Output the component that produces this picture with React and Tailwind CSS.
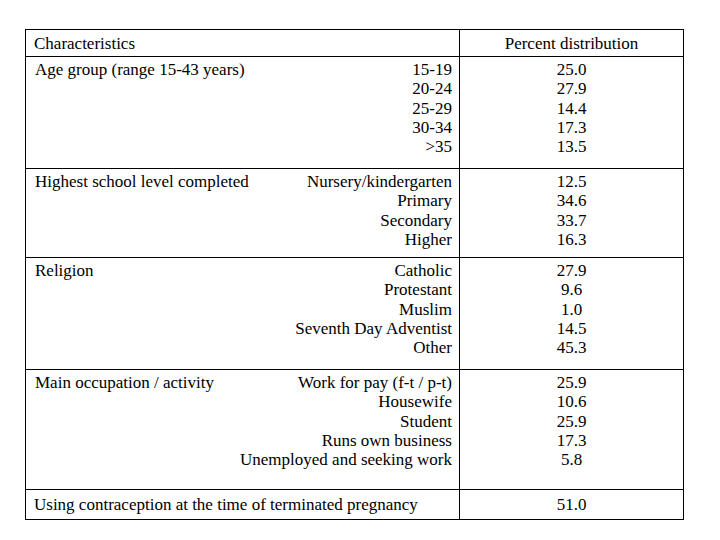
const rows = [
  {
    label: 'Age group (range 15-43 years)',
    h: 'h-[112px]',
    items: [
      ['15-19', '25.0'],
      ['20-24', '27.9'],
      ['25-29', '14.4'],
      ['30-34', '17.3'],
      ['>35', '13.5'],
    ],
  },
  {
    label: 'Highest school level completed',
    h: 'h-[89px]',
    items: [
      ['Nursery/kindergarten', '12.5'],
      ['Primary', '34.6'],
      ['Secondary', '33.7'],
      ['Higher', '16.3'],
    ],
  },
  {
    label: 'Religion',
    h: 'h-[112px]',
    items: [
      ['Catholic', '27.9'],
      ['Protestant', '9.6'],
      ['Muslim', '1.0'],
      ['Seventh Day Adventist', '14.5'],
      ['Other', '45.3'],
    ],
  },
  {
    label: 'Main occupation / activity',
    h: 'h-[120px]',
    items: [
      ['Work for pay (f-t / p-t)', '25.9'],
      ['Housewife', '10.6'],
      ['Student', '25.9'],
      ['Runs own business', '17.3'],
      ['Unemployed and seeking work', '5.8'],
    ],
  },
];

export default function App() {
  return (
    <div className="w-[720px] h-[540px] bg-white pt-[29px] pl-[25px] font-['Liberation_Serif',serif] text-[17px] leading-[19.25px] text-black">
      <div className="w-[659px] border border-black">
        {/* header */}
        <div className="flex h-[27px] border-b border-black">
          <div className="flex-1 flex items-center pl-[8px] pt-[1px]">Characteristics</div>
          <div className="w-[224px] border-l border-black flex items-center justify-center pt-[1px]">
            Percent distribution
          </div>
        </div>

        {rows.map((row) => (
          <div key={row.label} className={`flex border-b border-black ${row.h}`}>
            <div className="flex-1 flex justify-between pt-[3px] pl-[9px] pr-[7px]">
              <div>{row.label}</div>
              <div className="text-right">
                {row.items.map(([k]) => (
                  <div key={k}>{k}</div>
                ))}
              </div>
            </div>
            <div className="w-[224px] border-l border-black pt-[3px] text-center">
              {row.items.map(([k, v]) => (
                <div key={k}>{v}</div>
              ))}
            </div>
          </div>
        ))}

        {/* summary row */}
        <div className="flex h-[29px]">
          <div className="flex-1 flex items-center pl-[8px] pt-[1px]">
            Using contraception at the time of terminated pregnancy
          </div>
          <div className="w-[224px] border-l border-black flex items-center justify-center pt-[1px]">51.0</div>
        </div>
      </div>
    </div>
  );
}
